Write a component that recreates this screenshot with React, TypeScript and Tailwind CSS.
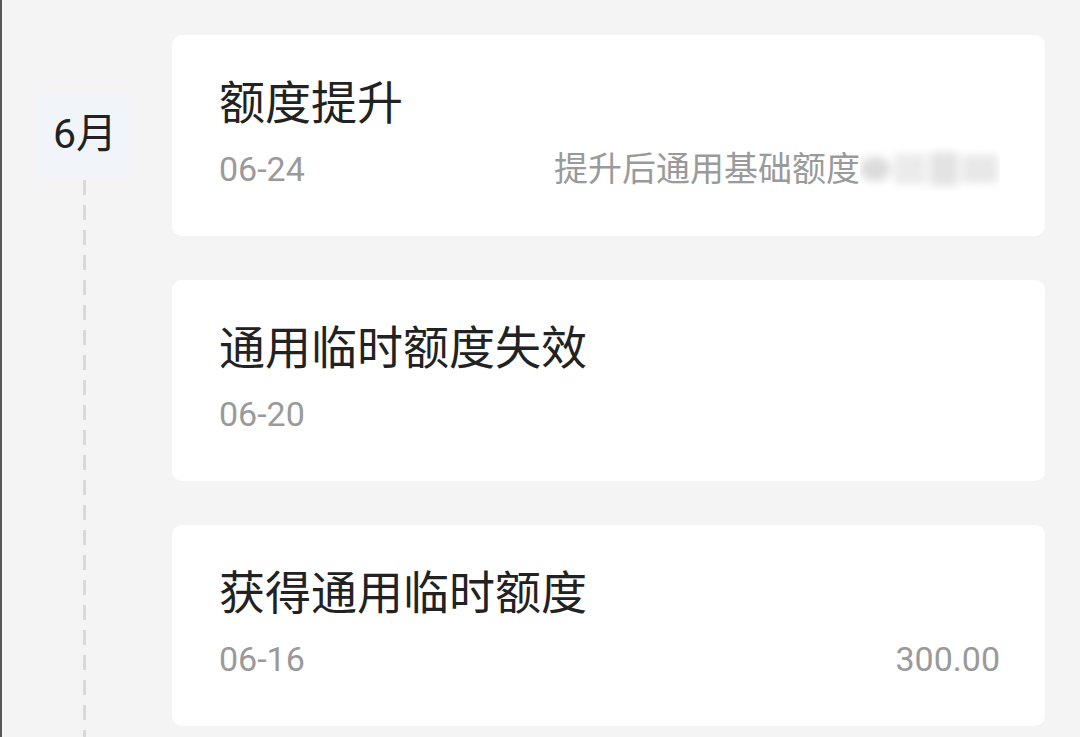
import React from 'react';

type Record = {
  title: string;
  date: string;
  right?: React.ReactNode;
};

const Masked = () => (
  <span className="relative inline-block w-[140px] h-[44px] align-middle overflow-hidden">
    <span className="absolute inset-0 flex items-center gap-[4px] blur-[4px]">
      <span className="w-[30px] h-[24px] bg-[#dcdcdc] rounded-full" />
      <span className="w-[32px] h-[30px] bg-[#ebebeb]" />
      <span className="w-[28px] h-[34px] bg-[#e3e3e3]" />
      <span className="w-[36px] h-[28px] bg-[#e8e8e8]" />
    </span>
  </span>
);

const records: Record[] = [
  {
    title: '额度提升',
    date: '06-24',
    right: (
      <span className="flex items-center">
        提升后通用基础额度
        <Masked />
      </span>
    ),
  },
  { title: '通用临时额度失效', date: '06-20' },
  { title: '获得通用临时额度', date: '06-16', right: '300.00' },
];

export default function App() {
  return (
    <div
      className="w-[1080px] h-[737px] overflow-hidden bg-[#f4f4f4] border-l-2 border-[#585858] flex"
      style={{ fontFamily: 'Roboto, "Noto Sans CJK SC", sans-serif' }}
    >
      <div className="w-[170px] shrink-0 flex flex-col pl-[34px] pt-[93px]">
        <div className="w-[98px] h-[84px] bg-[#f1f4f9] flex items-center justify-center text-[41px] text-[#222]">
          6月
        </div>
        <div className="w-[3px] ml-[47px] mt-[3px] flex-1 bg-[repeating-linear-gradient(to_bottom,#d9d9d9_0,#d9d9d9_15px,transparent_15px,transparent_25px)]" />
      </div>
      <div className="w-[873px] pt-[35px] flex flex-col gap-[44px]">
        {records.map((r) => (
          <div
            key={r.title}
            className="h-[201px] bg-white rounded-[10px] pl-[47px] pr-[45px] pt-[40px] flex flex-col"
          >
            <div className="text-[46px] leading-[56px] text-[#222]">{r.title}</div>
            <div className="mt-[16px] flex items-center justify-between text-[34px] leading-[44px] text-[#9a9a9a]">
              <span>{r.date}</span>
              {r.right && <span>{r.right}</span>}
            </div>
          </div>
        ))}
      </div>
    </div>
  );
}
